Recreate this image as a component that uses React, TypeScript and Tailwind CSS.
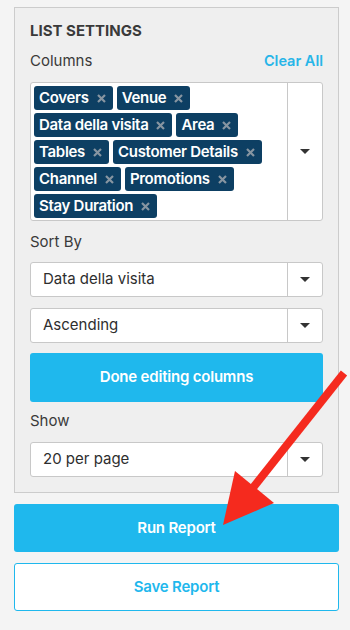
import React from "react";

const tags = [
  "Covers",
  "Venue",
  "Data della visita",
  "Area",
  "Tables",
  "Customer Details",
  "Channel",
  "Promotions",
  "Stay Duration",
];

function Caret() {
  return (
    <svg width="10" height="5" viewBox="0 0 10 5">
      <polygon points="0,0 10,0 5,5" fill="#333" />
    </svg>
  );
}

function XIcon() {
  return (
    <svg width="9" height="9" viewBox="0 0 9 9" className="ml-[8px]">
      <path d="M1 1 L8 8 M8 1 L1 8" stroke="#8795a1" strokeWidth="2.2" strokeLinecap="butt" />
    </svg>
  );
}

function Select({ value }: { value: string }) {
  return (
    <div className="flex h-[35px] bg-white border border-[#c8c8c8] rounded-[3px]">
      <div className="flex-1 flex items-center pl-[12px] text-[15px] text-[#2e2e2e]">{value}</div>
      <div className="w-[35px] border-l border-[#c8c8c8] flex items-center justify-center">
        <Caret />
      </div>
    </div>
  );
}

export default function App() {
  return (
    <div
      className="relative w-[350px] h-[630px] bg-[#f4f4f4] overflow-hidden"
      style={{ fontFamily: "Inter, 'Open Sans', sans-serif" }}
    >
      <div className="pt-[7px] pl-[14px] pr-[11px]">
        <div className="border border-[#cccccc] bg-[#efefef] px-[15px] pt-[13px] pb-[15px]">
          <div className="text-[15px] leading-[20px] font-bold text-[#3a3a3a]">LIST SETTINGS</div>
          <div className="mt-[10px] flex justify-between items-center leading-[20px]">
            <span className="text-[15px] text-[#3a3a3a]">Columns</span>
            <span className="text-[14.5px] font-semibold text-[#27b5e8]">Clear All</span>
          </div>
          <div className="mt-[11px] h-[139px] flex bg-white border border-[#c8c8c8] rounded-[3px]">
            <div className="flex-1 flex flex-wrap content-start gap-x-[4px] gap-y-[3px] p-[3px]">
              {tags.map((t) => (
                <div
                  key={t}
                  className="h-[24px] flex items-center bg-[#0d3f63] rounded-[3px] pl-[5px] pr-[7px] text-white text-[15px] font-semibold tracking-[-0.3px]"
                >
                  <span>{t}</span>
                  <XIcon />
                </div>
              ))}
            </div>
            <div className="w-[35px] border-l border-[#c8c8c8] flex items-center justify-center">
              <Caret />
            </div>
          </div>
          <div className="mt-[11px] text-[15px] leading-[20px] text-[#3a3a3a]">Sort By</div>
          <div className="mt-[10px]">
            <Select value="Data della visita" />
          </div>
          <div className="mt-[11px]">
            <Select value="Ascending" />
          </div>
          <div className="mt-[10px] h-[49px] rounded-[3px] bg-[#1fb8ed] flex items-center justify-center text-white text-[15px] font-semibold tracking-[-0.2px]">
            Done editing columns
          </div>
          <div className="mt-[9px] text-[15px] leading-[20px] text-[#3a3a3a]">Show</div>
          <div className="mt-[11px]">
            <Select value="20 per page" />
          </div>
        </div>
        <div className="mt-[11px] h-[48px] rounded-[3px] bg-[#1fb8ed] flex items-center justify-center text-white text-[15px] font-semibold tracking-[-0.2px]">
          Run Report
        </div>
        <div className="mt-[11px] h-[48px] rounded-[3px] bg-white border border-[#1fb8ed] flex items-center justify-center text-[#1fb8ed] text-[15px] font-semibold tracking-[-0.2px]">
          Save Report
        </div>
      </div>
      <svg className="absolute top-0 left-0 pointer-events-none" width="350" height="630" viewBox="0 0 350 630">
        <line x1="344" y1="373" x2="252" y2="489" stroke="#f52a1e" strokeWidth="8" />
        <polygon points="223,525 235,471 274,503" fill="#f52a1e" />
      </svg>
    </div>
  );
}
